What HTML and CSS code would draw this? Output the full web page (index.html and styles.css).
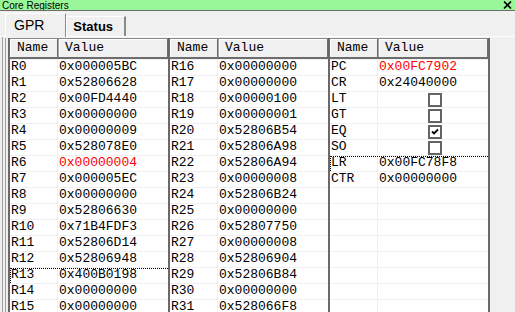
FILE: index.html
```html
<!DOCTYPE html>
<html lang="en">
<head>
    <meta charset="UTF-8">
    <title>Core Registers</title>
    <link rel="stylesheet" href="styles.css">
</head>
<body>
    <div class="titlebar">
        <span class="title">Core Registers</span>
        <svg class="close" width="9" height="8" viewBox="0 0 9 8">
            <path d="M1 0.5 L8 7.5 M8 0.5 L1 7.5" stroke="#000" stroke-width="1.6" fill="none"/>
        </svg>
    </div>

    <div class="tabstrip">
        <div class="tab active">GPR</div>
        <div class="tab">Status</div>
    </div>

    <div class="page">
        <div class="lists">
            <div class="list">
                <div class="header">
                    <div class="hcell name">Name</div>
                    <div class="hcell">Value</div>
                </div>
                <div class="row"><span class="name">R0</span><span class="value">0x000005BC</span></div>
                <div class="row"><span class="name">R1</span><span class="value">0x52806628</span></div>
                <div class="row"><span class="name">R2</span><span class="value">0x00FD4440</span></div>
                <div class="row"><span class="name">R3</span><span class="value">0x00000000</span></div>
                <div class="row"><span class="name">R4</span><span class="value">0x00000009</span></div>
                <div class="row"><span class="name">R5</span><span class="value">0x528078E0</span></div>
                <div class="row"><span class="name">R6</span><span class="value changed">0x00000004</span></div>
                <div class="row"><span class="name">R7</span><span class="value">0x000005EC</span></div>
                <div class="row"><span class="name">R8</span><span class="value">0x00000000</span></div>
                <div class="row"><span class="name">R9</span><span class="value">0x52806630</span></div>
                <div class="row"><span class="name">R10</span><span class="value">0x71B4FDF3</span></div>
                <div class="row"><span class="name">R11</span><span class="value">0x52806D14</span></div>
                <div class="row"><span class="name">R12</span><span class="value">0x52806948</span></div>
                <div class="row focus"><span class="name">R13</span><span class="value">0x400B0198</span></div>
                <div class="row"><span class="name">R14</span><span class="value">0x00000000</span></div>
                <div class="row"><span class="name">R15</span><span class="value">0x00000000</span></div>
            </div>

            <div class="list">
                <div class="header">
                    <div class="hcell name">Name</div>
                    <div class="hcell">Value</div>
                </div>
                <div class="row"><span class="name">R16</span><span class="value">0x00000000</span></div>
                <div class="row"><span class="name">R17</span><span class="value">0x00000000</span></div>
                <div class="row"><span class="name">R18</span><span class="value">0x00000100</span></div>
                <div class="row"><span class="name">R19</span><span class="value">0x00000001</span></div>
                <div class="row"><span class="name">R20</span><span class="value">0x52806B54</span></div>
                <div class="row"><span class="name">R21</span><span class="value">0x52806A98</span></div>
                <div class="row"><span class="name">R22</span><span class="value">0x52806A94</span></div>
                <div class="row"><span class="name">R23</span><span class="value">0x00000008</span></div>
                <div class="row"><span class="name">R24</span><span class="value">0x52806B24</span></div>
                <div class="row"><span class="name">R25</span><span class="value">0x00000000</span></div>
                <div class="row"><span class="name">R26</span><span class="value">0x52807750</span></div>
                <div class="row"><span class="name">R27</span><span class="value">0x00000008</span></div>
                <div class="row"><span class="name">R28</span><span class="value">0x52806904</span></div>
                <div class="row"><span class="name">R29</span><span class="value">0x52806B84</span></div>
                <div class="row"><span class="name">R30</span><span class="value">0x00000000</span></div>
                <div class="row"><span class="name">R31</span><span class="value">0x528066F8</span></div>
            </div>

            <div class="list last">
                <div class="header">
                    <div class="hcell name">Name</div>
                    <div class="hcell">Value</div>
                </div>
                <div class="row"><span class="name">PC</span><span class="value changed">0x00FC7902</span></div>
                <div class="row"><span class="name">CR</span><span class="value">0x24040000</span></div>
                <div class="row"><span class="name">LT</span><span class="value check"><span class="box"></span></span></div>
                <div class="row"><span class="name">GT</span><span class="value check"><span class="box"></span></span></div>
                <div class="row"><span class="name">EQ</span><span class="value check"><span class="box">
                    <svg width="10" height="10" viewBox="0 0 10 10"><path d="M2 4.5 L4 6.5 L8 2.5" stroke="#000" stroke-width="1.8" fill="none"/></svg>
                </span></span></div>
                <div class="row"><span class="name">SO</span><span class="value check"><span class="box"></span></span></div>
                <div class="row focus"><span class="name">LR</span><span class="value">0x00FC78F8</span></div>
                <div class="row"><span class="name">CTR</span><span class="value">0x00000000</span></div>
                <div class="row"><span class="name"></span><span class="value"></span></div>
                <div class="row"><span class="name"></span><span class="value"></span></div>
                <div class="row"><span class="name"></span><span class="value"></span></div>
                <div class="row"><span class="name"></span><span class="value"></span></div>
                <div class="row"><span class="name"></span><span class="value"></span></div>
                <div class="row"><span class="name"></span><span class="value"></span></div>
                <div class="row"><span class="name"></span><span class="value"></span></div>
                <div class="row"><span class="name"></span><span class="value"></span></div>
            </div>
        </div>
    </div>
</body>
</html>
```

FILE: styles.css
```css
body {
    margin: 0;
    width: 515px;
    height: 312px;
    overflow: hidden;
    background-color: #f0f0f0;
    font-family: 'Liberation Sans', Arial, sans-serif;
}
.titlebar {
    height: 10px;
    background-color: #99f799;
    border-bottom: 1px solid #6d6d6d;
    display: flex;
    justify-content: space-between;
    align-items: flex-start;
    overflow: hidden;
}
.title {
    font-size: 10px;
    line-height: 11px;
    padding-left: 2px;
    color: #000;
}
.close {
    margin: 1px 3px 0 0;
}
.tabstrip {
    height: 25px;
    display: flex;
    align-items: flex-end;
    padding-left: 5px;
    border-bottom: 1px solid #fff;
}
.tab {
    height: 19px;
    padding: 0 11px 0 6px;
    font-size: 13px;
    font-weight: bold;
    line-height: 20px;
    border-top: 1px solid #fff;
    border-left: 1px solid #fff;
    border-right: 2px solid #8a8a8a;
}
.tab.active {
    height: 23px;
    margin-bottom: -1px;
    padding: 0 21px 0 8px;
    font-size: 14px;
    font-weight: normal;
    line-height: 23px;
    background-color: #f0f0f0;
    border-right: 1px solid #8a8a8a;
}
.page {
    margin-left: 2px;
    padding-top: 1px;
    border-left: 1px solid #a0a0a0;
}
.lists {
    display: flex;
    margin-left: 2px;
    padding-left: 2px;
    border-left: 1px solid #a0a0a0;
    font-family: 'Liberation Mono', 'Courier New', monospace;
    font-size: 13px;
}
.list {
    width: 158px;
    height: 300px;
    border-left: 2px solid #696969;
    background-color: #fff;
}
.list.last {
    border-right: 2px solid #696969;
}
.header {
    display: grid;
    grid-template-columns: 48px 1fr;
    height: 21px;
    box-sizing: border-box;
    border-top: 1px solid #8a8a8a;
    border-bottom: 2px solid #6d6d6d;
    background-color: #f0f0f0;
}
.hcell {
    padding-left: 6px;
    line-height: 18px;
    border-right: 1px solid #6d6d6d;
    border-left: 1px solid #a0a0a0;
    box-shadow: inset 1px 1px #fff;
}
.hcell.name {
    border-left: none;
    padding-left: 7px;
}
.row {
    display: grid;
    grid-template-columns: 48px 1fr;
    height: 16px;
    box-sizing: border-box;
    border-top: 1px solid #f0f0f0;
    line-height: 14px;
    position: relative;
}
.row .name {
    padding-left: 1px;
    border-right: 1px solid #f0f0f0;
}
.row .value {
    padding-left: 1px;
}
.row .value.changed {
    color: #ff0000;
}
.row.focus::before {
    content: '';
    position: absolute;
    left: 0;
    right: 0;
    top: 0;
    bottom: 0;
    border-top: 1px dotted #000;
    border-left: 1px dotted #000;
}
.check {
    display: flex;
    justify-content: center;
    align-items: center;
}
.box {
    width: 14px;
    height: 14px;
    box-sizing: border-box;
    border: 2px solid #646464;
    background-color: #fff;
    display: flex;
    justify-content: center;
    align-items: center;
    margin-left: 2px;
}
```
